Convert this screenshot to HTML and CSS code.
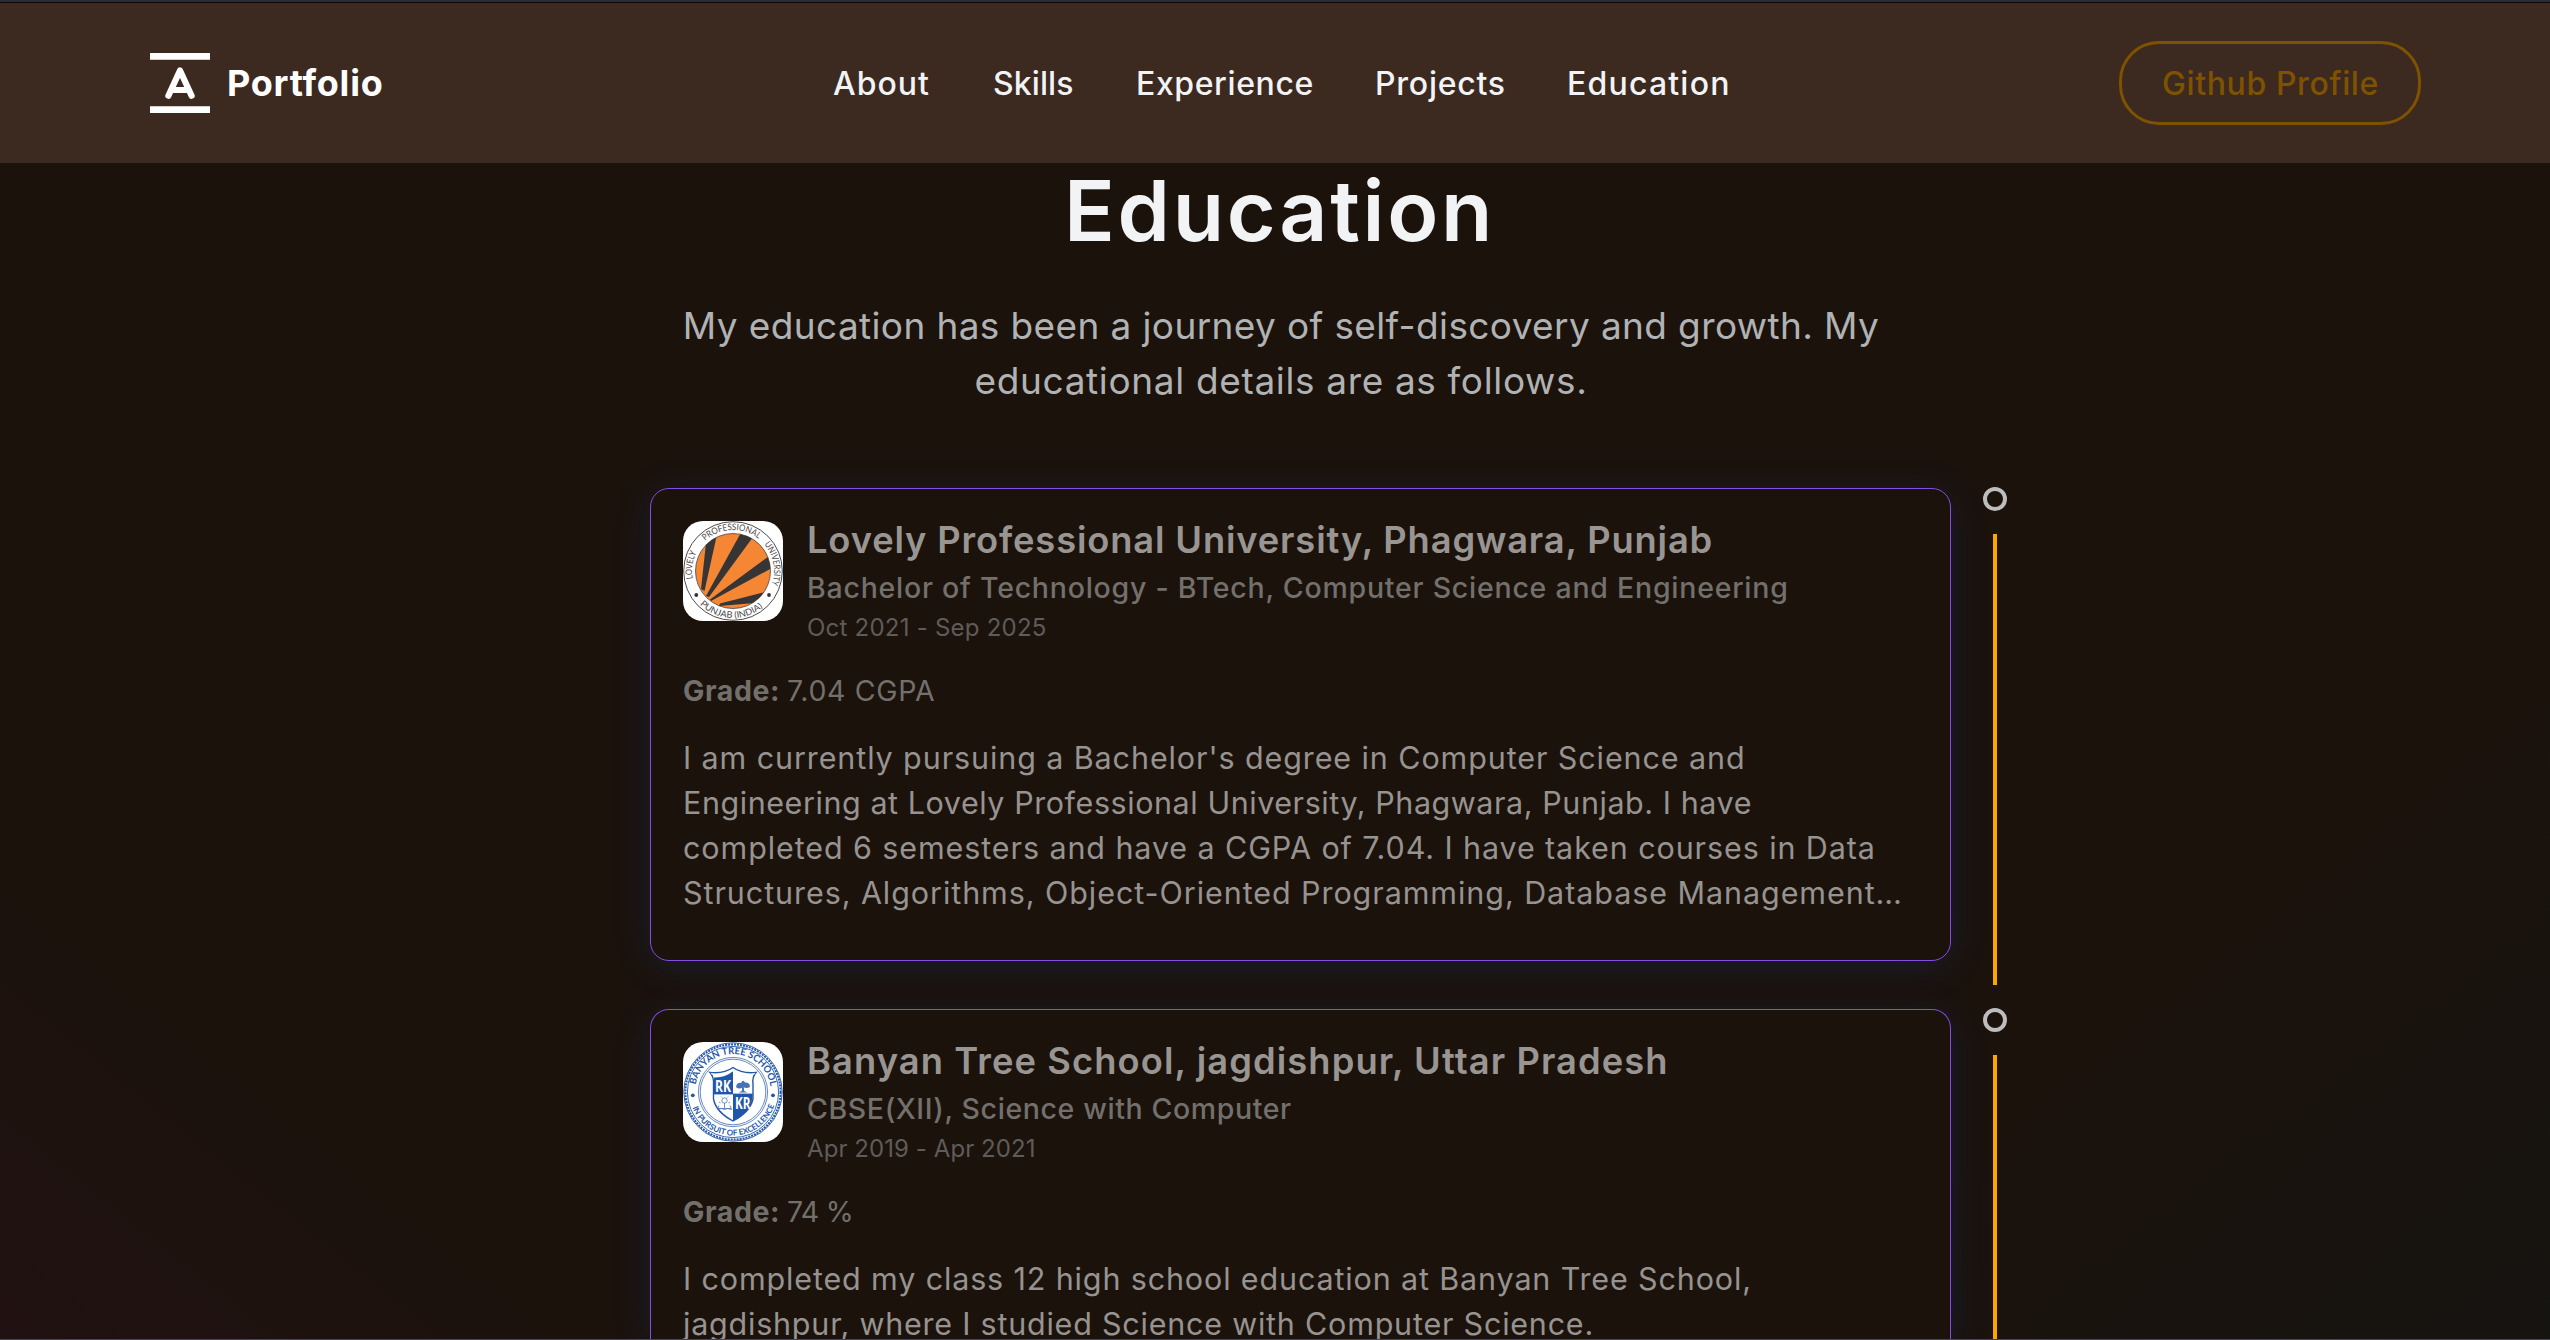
FILE: index.html
```html
<!DOCTYPE html>
<html lang="en">
<head>
<meta charset="utf-8">
<title>Portfolio - Education</title>
<link rel="stylesheet" href="styles.css">
</head>
<body>
<div class="page">
<header class="navbar">
  <a class="brand">
    <svg class="brand-mark" viewBox="0 0 60 60">
      <path d="M0 0H60V6.7H0ZM0 53.3H60V60H0Z" fill="#fff"/>
      <path d="M18.4 42.8L30 17.5L41.6 42.8M22 37H38" fill="none" stroke="#fff" stroke-width="6.2" stroke-linecap="round" stroke-linejoin="round"/>
    </svg>
    <span class="brand-name">Portfolio</span>
  </a>
  <nav class="links">
    <a class="link link-about">About</a>
    <a class="link link-skills">Skills</a>
    <a class="link link-experience">Experience</a>
    <a class="link link-projects">Projects</a>
    <a class="link link-education">Education</a>
  </nav>
  <a class="github">Github Profile</a>
</header>

<main class="education">
  <h1 class="heading">Education</h1>
  <p class="lead"><span class="lead-1">My education has been a journey of self-discovery and growth. My</span><br><span class="lead-2">educational details are as follows.</span></p>

  <section class="timeline">
    <div class="item">
      <article class="card">
        <div class="top">
          <svg class="seal" viewBox="0 0 100 100">
            <defs>
              <clipPath id="disc"><circle cx="50" cy="50" r="37.5"/></clipPath>
              <path id="lpu-top" d="M50 91A41 41 0 0 1 50 9A41 41 0 0 1 50 91"/>
              <path id="lpu-bottom" d="M3 50A47 47 0 0 0 97 50"/>
            </defs>
            <rect width="100" height="100" fill="#fff"/>
            <circle cx="50" cy="50" r="49.3" fill="#fff" stroke="#3a3637" stroke-width=".9"/>
            <circle cx="50" cy="50" r="37.5" fill="#f58634" stroke="#4b4543" stroke-width=".8"/>
            <g clip-path="url(#disc)" fill="#373435">
              <path d="M23 22L35 9L21.5 70L18 68Z"/>
              <path d="M60 8L73 12L26 76L23 75Z"/>
              <path d="M89 33L90 46.5L28 80L27 78.5Z"/>
              <path d="M86 70L72 82L36 85L37 82.5Z"/>
            </g>
            <g class="seal-text lpu-text">
              <text><textPath href="#lpu-top" startOffset="56.5" textLength="27" lengthAdjust="spacingAndGlyphs">LOVELY</textPath></text>
              <text><textPath href="#lpu-top" startOffset="98" textLength="58" lengthAdjust="spacingAndGlyphs">PROFESSIONAL</textPath></text>
              <text><textPath href="#lpu-top" startOffset="164" textLength="43" lengthAdjust="spacingAndGlyphs">UNIVERSITY</textPath></text>
              <text><textPath href="#lpu-bottom" startOffset="37" textLength="69" lengthAdjust="spacingAndGlyphs">PUNJAB (INDIA)</textPath></text>
            </g>
            <circle cx="13.3" cy="74" r="1.9" fill="#373435"/>
            <circle cx="86" cy="74" r="1.9" fill="#373435"/>
          </svg>
          <div class="info">
            <h2 class="school school-1">Lovely Professional University, Phagwara, Punjab</h2>
            <div class="degree degree-1">Bachelor of Technology - BTech, Computer Science and Engineering</div>
            <div class="date date-1">Oct 2021 - Sep 2025</div>
          </div>
        </div>
        <div class="grade"><b class="grade-label">Grade:</b><span class="grade-1">7.04 CGPA</span></div>
        <p class="desc"><span class="d1">I am currently pursuing a Bachelor's degree in Computer Science and</span><br><span class="d2">Engineering at Lovely Professional University, Phagwara, Punjab. I have</span><br><span class="d3">completed 6 semesters and have a CGPA of 7.04. I have taken courses in Data</span><br><span class="d4">Structures, Algorithms, Object-Oriented Programming, Database Management…</span></p>
      </article>
      <div class="rail"><span class="dot"></span><span class="line"></span></div>
    </div>

    <div class="item item-last">
      <article class="card">
        <div class="top">
          <svg class="seal" viewBox="0 0 100 100">
            <defs>
              <path id="bts-top" d="M50 88A38 38 0 0 1 50 12A38 38 0 0 1 50 88"/>
              <path id="bts-bottom" d="M6.5 50A43.5 43.5 0 0 0 93.5 50"/>
            </defs>
            <rect width="100" height="100" fill="#fff"/>
            <g fill="none" stroke="#2457a8">
              <circle cx="50" cy="50" r="49.2" stroke-width=".9"/>
              <circle cx="50" cy="50" r="47.6" stroke-width="2" stroke-dasharray="2 1"/>
              <circle cx="50" cy="50" r="45.6" stroke-width=".9"/>
              <circle cx="50" cy="50" r="34.6" stroke-width=".7"/>
              <circle cx="50" cy="50" r="32.8" stroke-width=".7"/>
            </g>
            <path d="M50 25.5Q59 32 73 30.5Q69 35 70 42V57Q67 70 50 79Q33 70 30.5 57V42Q31 35 27 30.5Q41 32 50 25.5Z" fill="#fff" stroke="#2457a8" stroke-width="1.4"/>
            <path d="M50 29Q42 36 31 35.5V52H50V79Q67 70 69.5 56V52H50Z" fill="#1f55ab"/>
            <path d="M28 31.5Q40 35.5 50 28.5Q60 35.5 72 31.5" fill="none" stroke="#fff" stroke-width="1.2"/>
            <path d="M30 52H70" stroke="#2457a8" stroke-width=".8"/>
            <g fill="#4673b5">
              <path d="M53 45Q54 40 58 41Q60 37 62 40.5Q67 40 67 45Q63 47 60.5 45Q56 48 53 45Z"/>
              <path d="M59.3 44H60.7L61.2 49L64.5 50.5H55.5L58.8 49Z"/>
            </g>
            <g fill="none" stroke="#4673b5" stroke-width=".8">
              <circle cx="41.5" cy="58.5" r="2.7"/>
              <path d="M41.5 61V66M36 60L37.5 61M47 60L45.5 61M38 54.5L39 55.5M45 54.5L44 55.5M35 66.5H48M36 63.5L34.5 67.5Q39 65.5 41.5 67.5Q44 65.5 48.5 67.5L47 63.5"/>
            </g>
            <g class="seal-text shield-text">
              <text x="32" y="49.5" textLength="16" lengthAdjust="spacingAndGlyphs">RK</text>
              <text x="52" y="67" textLength="15.5" lengthAdjust="spacingAndGlyphs">KR</text>
            </g>
            <g class="seal-text bts-text">
              <text><textPath href="#bts-top" startOffset="67" textLength="106" lengthAdjust="spacingAndGlyphs">BANYAN TREE SCHOOL</textPath></text>
              <text class="motto"><textPath href="#bts-bottom" startOffset="16" textLength="107" lengthAdjust="spacingAndGlyphs">IN PURSUIT OF EXCELLENCE</textPath></text>
            </g>
            <circle cx="9.8" cy="53.3" r="1.9" fill="#2457a8"/>
            <circle cx="90" cy="53.3" r="1.9" fill="#2457a8"/>
          </svg>
          <div class="info">
            <h2 class="school school-2">Banyan Tree School, jagdishpur, Uttar Pradesh</h2>
            <div class="degree degree-2">CBSE(XII), Science with Computer</div>
            <div class="date date-2">Apr 2019 - Apr 2021</div>
          </div>
        </div>
        <div class="grade"><b class="grade-label">Grade:</b><span class="grade-2">74 %</span></div>
        <p class="desc"><span class="d5">I completed my class 12 high school education at Banyan Tree School,</span><br><span class="d6">jagdishpur, where I studied Science with Computer Science.</span></p>
      </article>
      <div class="rail"><span class="dot"></span><span class="line"></span></div>
    </div>
  </section>
</main>
</div>
</body>
</html>
```
FILE: styles.css
```css
* { box-sizing: border-box; margin: 0; padding: 0; }

html, body { height: 1340px; overflow: hidden; }

body {
  font-family: Inter, "Open Sans", sans-serif;
  white-space: nowrap;
}

.page {
  height: 1340px;
  overflow: hidden;
  border-top: 2px solid #2b2b35;
  border-bottom: 1px solid #4a4450;
  background:
    linear-gradient(38.73deg, rgba(204, 0, 187, .035) 0%, rgba(201, 32, 184, 0) 14%),
    linear-gradient(141.27deg, rgba(10, 24, 28, 0) 80%, rgba(10, 24, 28, .3) 100%),
    #1b120c;
}

/* Navigation */
.navbar {
  display: grid;
  grid-template-columns: 682px 1fr auto;
  align-items: center;
  height: 161px;
  padding: 0 129px 0 150px;
  border-top: 1px solid #0a0a0a;
  background: #3c2a21;
  color: #f2f3f4;
}
.brand { display: flex; align-items: center; gap: 17px; }
.brand-mark { width: 60px; height: 60px; }
.brand-name { font-size: 36px; font-weight: 700; letter-spacing: .75px; color: #fff; }
.links { display: flex; gap: 64px; padding-left: 1px; font-size: 32px; font-weight: 500; }
.link-about { width: 96px; letter-spacing: 1px; }
.link-skills { width: 79px; letter-spacing: .1px; }
.link-experience { width: 175px; letter-spacing: .6px; }
.link-projects { width: 128px; letter-spacing: .75px; }
.link-education { width: 161px; letter-spacing: 1.2px; }
.github {
  display: flex;
  align-items: center;
  width: 302px;
  height: 84px;
  padding-left: 40px;
  border: 3px solid #7f5200;
  border-radius: 40px;
  font-size: 32px;
  font-weight: 500;
  letter-spacing: .6px;
  color: #7f5200;
}

/* Section heading */
.education { width: 2550px; padding-top: 6px; }
.heading {
  padding-left: 1064px;
  font-size: 84px;
  line-height: 84px;
  font-weight: 600;
  letter-spacing: 2.7px;
  color: #f2f3f4;
}
.lead {
  margin-top: 45px;
  padding-left: 12px;
  text-align: center;
  font-size: 37px;
  line-height: 55px;
  color: #b1b2b3;
}
.lead-1 { letter-spacing: .38px; }
.lead-2 { letter-spacing: .65px; }

/* Timeline */
.timeline {
  display: flex;
  flex-direction: column;
  gap: 24px;
  margin-top: 80px;
  padding-left: 650px;
}
.item { display: flex; gap: 32px; height: 497px; }
.item-last { height: 330px; }
.card {
  width: 1301px;
  height: 473px;
  padding: 32px;
  border: 1px solid #854ce6;
  border-radius: 19px;
  background: #1b120c;
  box-shadow: rgba(23, 92, 230, .15) 0 6px 38px;
}
.item-last .card { height: 330px; border-bottom: 0; border-bottom-left-radius: 0; border-bottom-right-radius: 0; }
.top { display: flex; gap: 24px; }
.seal { width: 100px; height: 100px; border-radius: 20px; }
.info { display: flex; flex-direction: column; }
.school { font-size: 36.3px; line-height: 39px; font-weight: 600; color: #999592; }
.school-1 { letter-spacing: .85px; }
.school-2 { letter-spacing: 1.09px; }
.degree { margin-top: 9px; font-size: 28.5px; line-height: 38px; font-weight: 500; color: #73706c; }
.degree-1 { letter-spacing: .76px; }
.degree-2 { letter-spacing: .61px; }
.date { margin-top: 4px; font-size: 24px; line-height: 33px; color: #5f5b58; }
.date-1 { letter-spacing: .23px; }
.date-2 { letter-spacing: .07px; }
.grade { display: flex; margin-top: 27px; font-size: 28.5px; line-height: 40px; color: #73706c; }
.grade-label { width: 104px; font-weight: 700; letter-spacing: .6px; }
.grade-1 { letter-spacing: .68px; }
.grade-2 { letter-spacing: -.7px; }
.desc { margin-top: 24px; font-size: 30.5px; line-height: 45px; color: #979390; }
.d1 { letter-spacing: .9px; }
.d2 { letter-spacing: .56px; }
.d3 { letter-spacing: .9px; }
.d4 { letter-spacing: .93px; }
.d5 { letter-spacing: .86px; }
.d6 { letter-spacing: .78px; }

.rail { display: flex; flex-direction: column; align-items: center; width: 24px; margin-top: -1px; }
.dot { width: 24px; height: 24px; border: 4px solid #bdbdbd; border-radius: 50%; }
.line { flex: 1; width: 4px; margin-top: 23px; background: #ffa500; }

/* Seal lettering */
.seal-text { font-family: Lato, sans-serif; }
.lpu-text { font-size: 9px; fill: #4a4647; }
.shield-text { font-family: "Open Sans", sans-serif; font-size: 16px; font-weight: 700; fill: #fff; }
.bts-text { font-size: 9.5px; font-weight: 700; fill: #2457a8; }
.bts-text .motto { font-size: 8px; }
```
